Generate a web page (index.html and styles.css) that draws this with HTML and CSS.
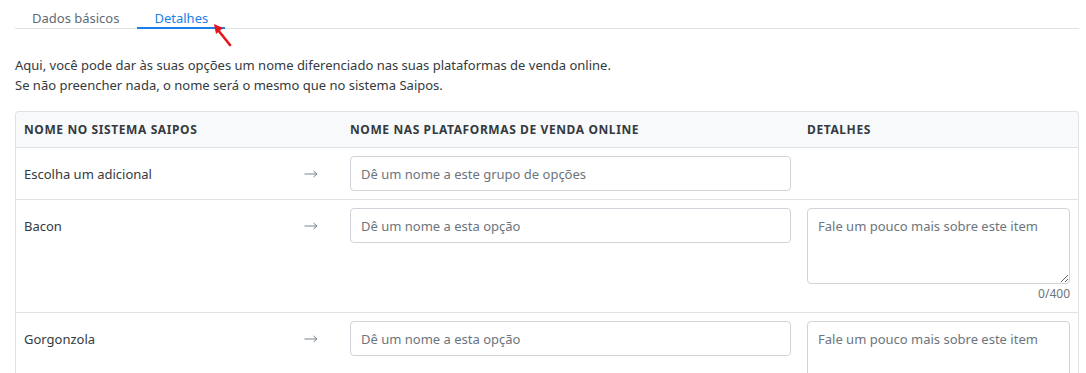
FILE: index.html
```html
<!DOCTYPE html>
<html lang="pt-BR">
<head>
  <meta charset="UTF-8" />
  <title>Detalhes do grupo</title>
  <link rel="stylesheet" href="styles.css">
</head>
<body>
  <div class="page">
    <div class="tabs">
      <span class="tab">Dados básicos</span>
      <span class="tab active">Detalhes</span>
      <svg class="pointer" width="24" height="26" viewBox="0 0 24 26">
        <line x1="18" y1="23" x2="6" y2="8" stroke="#e8141b" stroke-width="2.6" stroke-linecap="round"/>
        <polygon points="2,2 11,6 4,12" fill="#e8141b"/>
      </svg>
    </div>

    <p class="intro">
      Aqui, você pode dar às suas opções um nome diferenciado nas suas plataformas de venda online.<br>
      Se não preencher nada, o nome será o mesmo que no sistema Saipos.
    </p>

    <table class="names">
      <thead>
        <tr>
          <th class="col-name">Nome no sistema Saipos</th>
          <th class="col-online">Nome nas plataformas de venda online</th>
          <th class="col-details">Detalhes</th>
        </tr>
      </thead>
      <tbody>
        <tr>
          <td>
            <div class="name-cell">
              <span>Escolha um adicional</span>
              <svg class="arrow" width="14" height="8" viewBox="0 0 14 8"><path d="M0.5 4H13M9.5 1L13 4L9.5 7" fill="none" stroke="#7b848c" stroke-width="1"/></svg>
            </div>
          </td>
          <td><input class="field" type="text" placeholder="Dê um nome a este grupo de opções"></td>
          <td></td>
        </tr>
        <tr>
          <td>
            <div class="name-cell">
              <span>Bacon</span>
              <svg class="arrow" width="14" height="8" viewBox="0 0 14 8"><path d="M0.5 4H13M9.5 1L13 4L9.5 7" fill="none" stroke="#7b848c" stroke-width="1"/></svg>
            </div>
          </td>
          <td><input class="field" type="text" placeholder="Dê um nome a esta opção"></td>
          <td>
            <textarea class="area" placeholder="Fale um pouco mais sobre este item"></textarea>
            <div class="counter">0/400</div>
          </td>
        </tr>
        <tr>
          <td>
            <div class="name-cell">
              <span>Gorgonzola</span>
              <svg class="arrow" width="14" height="8" viewBox="0 0 14 8"><path d="M0.5 4H13M9.5 1L13 4L9.5 7" fill="none" stroke="#7b848c" stroke-width="1"/></svg>
            </div>
          </td>
          <td><input class="field" type="text" placeholder="Dê um nome a esta opção"></td>
          <td>
            <textarea class="area" placeholder="Fale um pouco mais sobre este item"></textarea>
            <div class="counter">0/400</div>
          </td>
        </tr>
      </tbody>
    </table>
  </div>
</body>
</html>
```

FILE: styles.css
```css
body {
  margin: 0;
  background: #fff;
  font-family: 'Noto Sans', 'Open Sans', sans-serif;
  font-size: 13px;
  color: #343a40;
}

.page {
  padding: 0 7px 0 15px;
}

.tabs {
  position: relative;
  display: flex;
  padding-left: 1px;
  border-bottom: 1px solid #dee2e6;
  height: 29px;
  box-sizing: border-box;
  padding-top: 8px;
}

.tab {
  padding: 0 16px;
  color: #5f6b76;
  line-height: 20px;
  height: 20px;
}

.tab.active {
  margin-left: 2px;
  padding: 0 17px;
  color: #1a7fe8;
  border-bottom: 2px solid #1a7fe8;
  height: 19px;
}

.pointer {
  position: absolute;
  left: 197px;
  top: 22px;
}

.intro {
  margin: 26px 0 16px;
  line-height: 20px;
  color: #343a40;
}

.names {
  width: 100%;
  border-collapse: separate;
  border-spacing: 0;
  border: 1px solid #dee2e6;
  border-bottom: none;
  border-radius: 4px 4px 0 0;
  table-layout: fixed;
}

.names th {
  background: #f8f9fa;
  text-align: left;
  font-size: 12px;
  font-weight: 700;
  letter-spacing: 0.6px;
  text-transform: uppercase;
  color: #343a40;
  height: 35px;
  padding: 0 8px;
  border-bottom: 1px solid #dee2e6;
}

.names th:first-child {
  border-radius: 4px 0 0 0;
}

.names th:last-child {
  border-radius: 0 4px 0 0;
}

.col-name {
  width: 310px;
}

.col-online {
  width: 441px;
}

.names td {
  padding: 8px;
  vertical-align: top;
  border-bottom: 1px solid #dee2e6;
}

.name-cell {
  display: flex;
  justify-content: space-between;
  align-items: center;
  height: 35px;
  padding-right: 16px;
}

.field {
  display: block;
  width: 100%;
  height: 35px;
  box-sizing: border-box;
  border: 1px solid #ced4da;
  border-radius: 4px;
  padding: 0 10px;
  font-family: inherit;
  font-size: 13px;
  color: #343a40;
}

.area {
  display: block;
  width: 100%;
  height: 76px;
  box-sizing: border-box;
  border: 1px solid #ced4da;
  border-radius: 4px;
  padding: 7px 10px;
  font-family: inherit;
  font-size: 13px;
  line-height: 20px;
  resize: vertical;
}

.field::placeholder,
.area::placeholder {
  color: #6c757d;
  opacity: 1;
}

.counter {
  text-align: right;
  font-size: 12px;
  color: #6c757d;
  line-height: 20px;
}
```
